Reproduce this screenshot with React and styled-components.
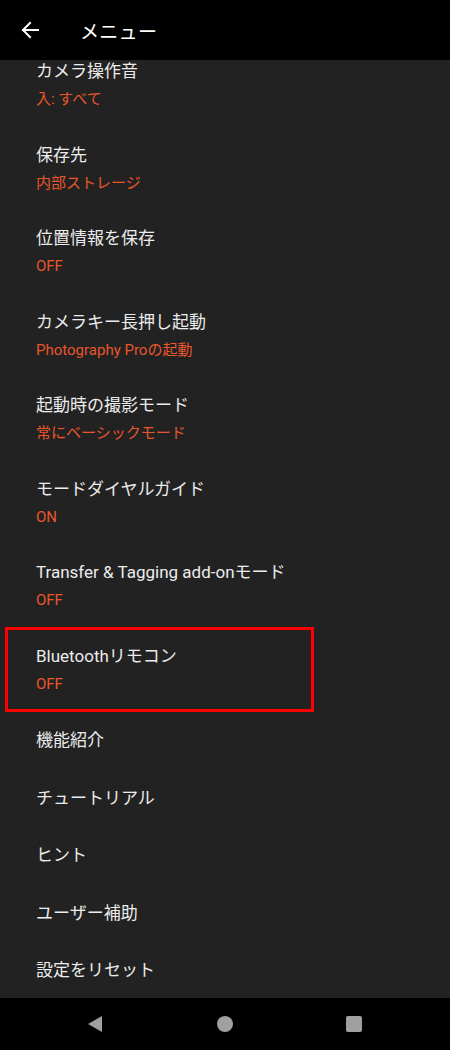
import React from "react";
import styled, { createGlobalStyle } from "styled-components";

const GlobalStyle = createGlobalStyle`
  html, body {
    margin: 0;
    padding: 0;
    background: #000;
  }
  body {
    font-family: Roboto, "Noto Sans CJK JP", sans-serif;
    -webkit-font-smoothing: antialiased;
  }
`;

const items = [
  { title: "カメラ操作音", value: "入: すべて" },
  { title: "保存先", value: "内部ストレージ" },
  { title: "位置情報を保存", value: "OFF" },
  { title: "カメラキー長押し起動", value: "Photography Proの起動" },
  { title: "起動時の撮影モード", value: "常にベーシックモード" },
  { title: "モードダイヤルガイド", value: "ON" },
  { title: "Transfer & Tagging add-onモード", value: "OFF" },
  { title: "Bluetoothリモコン", value: "OFF", highlighted: true },
  { title: "機能紹介" },
  { title: "チュートリアル" },
  { title: "ヒント" },
  { title: "ユーザー補助" },
  { title: "設定をリセット" },
];

const App = () => {
  return (
    <Screen>
      <GlobalStyle />
      <Header>
        <BackButton>
          <svg width="18" height="18" viewBox="0 0 18 18" fill="none">
            <path
              d="M17 9H2M9 2L2 9l7 7"
              stroke="#fff"
              strokeWidth="2"
              strokeLinecap="square"
            />
          </svg>
        </BackButton>
        <Title>メニュー</Title>
      </Header>
      <Viewport>
        <List>
          {items.map((item) => (
            <Item
              key={item.title}
              $twoLine={!!item.value}
              $highlighted={item.highlighted}
            >
              <ItemTitle>{item.title}</ItemTitle>
              {item.value && <ItemValue>{item.value}</ItemValue>}
            </Item>
          ))}
        </List>
      </Viewport>
      <NavBar>
        <NavButton>
          <svg width="18" height="20" viewBox="0 0 18 20">
            <path d="M16 2v16L2 10z" fill="#a0a0a0" />
          </svg>
        </NavButton>
        <NavButton>
          <svg width="18" height="18" viewBox="0 0 18 18">
            <circle cx="9" cy="9" r="8" fill="#a0a0a0" />
          </svg>
        </NavButton>
        <NavButton>
          <svg width="18" height="18" viewBox="0 0 18 18">
            <rect x="1" y="1" width="16" height="16" rx="2" fill="#a0a0a0" />
          </svg>
        </NavButton>
      </NavBar>
    </Screen>
  );
};

export default App;

const Screen = styled.div`
  width: 450px;
  height: 1050px;
  display: flex;
  flex-direction: column;
  background: #222222;
  overflow: hidden;
`;

const Header = styled.div`
  height: 60px;
  flex-shrink: 0;
  background: #000;
  display: flex;
  align-items: center;
`;

const BackButton = styled.div`
  width: 80px;
  padding-left: 21px;
  box-sizing: border-box;
  display: flex;
  align-items: center;
`;

const Title = styled.div`
  color: #fff;
  font-size: 19px;
  letter-spacing: 0.3px;
`;

const Viewport = styled.div`
  flex: 1;
  overflow: hidden;
  background: #222222;
`;

const List = styled.div`
  margin-top: -17px;
  display: flex;
  flex-direction: column;
`;

const Item = styled.div`
  position: relative;
  height: ${(p) => (p.$twoLine ? "83.5px" : "57.5px")};
  padding-left: 36px;
  padding-top: ${(p) => (p.$twoLine ? "16px" : "17px")};
  box-sizing: border-box;
  display: flex;
  flex-direction: column;

  ${(p) =>
    p.$highlighted &&
    `
    &::after {
      content: "";
      position: absolute;
      left: 5px;
      top: -1px;
      width: 309px;
      height: 85px;
      border: 3px solid #ff0000;
      box-sizing: border-box;
    }
  `}
`;

const ItemTitle = styled.div`
  color: #ececec;
  font-size: 17px;
  line-height: 24px;
`;

const ItemValue = styled.div`
  color: #e8562b;
  font-size: 15px;
  line-height: 20px;
  margin-top: 6px;
`;

const NavBar = styled.div`
  height: 52px;
  flex-shrink: 0;
  background: #000;
  display: flex;
  align-items: center;
  justify-content: space-between;
  padding: 0 87px 0 86px;
`;

const NavButton = styled.div`
  display: flex;
  align-items: center;
  justify-content: center;
`;
